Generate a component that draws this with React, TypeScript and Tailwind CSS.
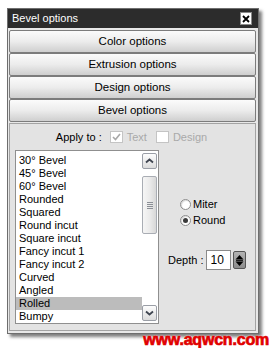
import { useState } from 'react'

const ITEMS = [
  '30° Bevel',
  '45° Bevel',
  '60° Bevel',
  'Rounded',
  'Squared',
  'Round incut',
  'Square incut',
  'Fancy incut 1',
  'Fancy incut 2',
  'Curved',
  'Angled',
  'Rolled',
  'Bumpy',
]

const TABS = ['Color options', 'Extrusion options', 'Design options', 'Bevel options']

function Chevron({ down }: { down?: boolean }) {
  return (
    <svg width="9" height="6" viewBox="0 0 9 6">
      <path
        d={down ? 'M1 1.5 L4.5 4.5 L8 1.5' : 'M1 4.5 L4.5 1.5 L8 4.5'}
        fill="none"
        stroke="#3f4550"
        strokeWidth="1.8"
      />
    </svg>
  )
}

function Radio({ checked, label, onClick }: { checked: boolean; label: string; onClick: () => void }) {
  return (
    <button onClick={onClick} className="flex items-center gap-[2px] h-[16px]">
      <span className="w-[11px] h-[11px] rounded-full border border-[#8c8c8c] bg-white flex items-center justify-center shadow-[inset_1px_1px_1px_rgba(0,0,0,0.15)]">
        {checked && <span className="w-[5px] h-[5px] rounded-full bg-[#3a3a3a]" />}
      </span>
      <span className="text-black">{label}</span>
    </button>
  )
}

export default function App() {
  const [selected, setSelected] = useState('Rolled')
  const [shape, setShape] = useState<'miter' | 'round'>('round')
  const [depth, setDepth] = useState(10)

  return (
    <div className="relative w-[269px] h-[348px] bg-white pl-[7px] pt-[8px] font-['Liberation_Sans',Arial,sans-serif] text-[11px] leading-[13px] text-black">
      {/* Panel */}
      <div className="w-[252px] h-[326px] border border-[#6e6e6e] bg-[#e8e8e8] flex flex-col shadow-[3px_3px_3px_rgba(0,0,0,0.5)]">
        {/* Title bar */}
        <div className="h-[19px] bg-[#2c2c2c] flex items-center justify-between pl-[4px] pr-[6px] shrink-0">
          <span className="text-white">Bevel options</span>
          <span className="w-[12px] h-[13px] bg-white border border-[#8a8a8a] flex items-center justify-center">
            <svg width="8" height="8" viewBox="0 0 8 8">
              <path d="M1 1 L7 7 M7 1 L1 7" stroke="#000" strokeWidth="1.8" />
            </svg>
          </span>
        </div>

        {/* Tab buttons */}
        <div className="flex flex-col px-[1px] pt-[2px] shrink-0">
          {TABS.map((t) => (
            <button
              key={t}
              className="h-[23px] w-[247px] rounded-[2px] border border-[#7c7c7c] bg-gradient-to-b from-[#fbfbfb] via-[#ececec] to-[#cfcfcf] text-center text-[11.5px] text-black"
            >
              {t}
            </button>
          ))}
        </div>

        {/* Body */}
        <div className="mx-[1px] mt-[1px] mb-[2px] w-[247px] flex-1 border border-[#a3a3a3] bg-[#e3e3e3] flex flex-col">
          {/* Apply to */}
          <div className="flex items-center justify-center h-[14px] mt-[6px] pr-[2px]">
            <span className="mr-[8px]">Apply to :</span>
            <span className="w-[13px] h-[12px] border border-[#c4c4c4] bg-white flex items-center justify-center">
              <svg width="9" height="8" viewBox="0 0 9 8">
                <path d="M1 4 L3.5 6.5 L8 1" fill="none" stroke="#a8a8a8" strokeWidth="1.6" />
              </svg>
            </span>
            <span className="ml-[4px] mr-[9px] text-[#a9a9a9]">Text</span>
            <span className="w-[13px] h-[12px] border border-[#c4c4c4] bg-white" />
            <span className="ml-[4px] text-[#a9a9a9]">Design</span>
          </div>

          <div className="flex mt-[6px]">
            {/* List box */}
            <div className="ml-[5px] w-[144px] h-[174px] border border-[#8f8f8f] bg-white flex">
              <div className="flex-1 pt-[3px]">
                {ITEMS.map((it) => (
                  <div
                    key={it}
                    onClick={() => setSelected(it)}
                    className={
                      'h-[13px] pl-[3px] leading-[13px] cursor-default ' +
                      (selected === it ? 'bg-[#bcbcbc]' : '')
                    }
                  >
                    {it}
                  </div>
                ))}
              </div>
              {/* Scrollbar */}
              <div className="w-[15px] mr-[1px] mt-[2px] mb-[2px] flex flex-col">
                <div className="h-[16px] rounded-[2px] border border-[#9a9ea6] bg-gradient-to-b from-[#fdfdfd] to-[#dcdcdc] flex items-center justify-center">
                  <Chevron />
                </div>
                <div className="mt-[7px] h-[58px] rounded-[2px] border border-[#a9adb4] bg-gradient-to-r from-[#f6f6f6] via-[#ebebeb] to-[#d8d8d8] flex flex-col items-center justify-center gap-[1px]">
                  <span className="w-[6px] h-[1px] bg-[#8b8f96]" />
                  <span className="w-[6px] h-[1px] bg-[#8b8f96]" />
                  <span className="w-[6px] h-[1px] bg-[#8b8f96]" />
                  <span className="w-[6px] h-[1px] bg-[#8b8f96]" />
                </div>
                <div className="flex-1" />
                <div className="h-[16px] rounded-[2px] border border-[#9a9ea6] bg-gradient-to-b from-[#fdfdfd] to-[#dcdcdc] flex items-center justify-center">
                  <Chevron down />
                </div>
              </div>
            </div>

            {/* Right column */}
            <div className="flex-1 flex flex-col">
              <div className="ml-[21px] mt-[46px] flex flex-col">
                <Radio checked={shape === 'miter'} label="Miter" onClick={() => setShape('miter')} />
                <Radio checked={shape === 'round'} label="Round" onClick={() => setShape('round')} />
              </div>
              <div className="ml-[9px] mt-[22px] flex items-center">
                <span className="mr-[3px]">Depth :</span>
                <span className="w-[25px] h-[20px] border border-[#8a8a8a] bg-white pl-[3px] flex items-center text-[12px]">
                  {depth}
                </span>
                <button
                  onClick={() => setDepth(depth + 1)}
                  className="ml-[2px] w-[13px] h-[18px] rounded-[2px] border border-[#555] bg-gradient-to-b from-[#b4b4b4] to-[#8c8c8c] flex items-center justify-center"
                >
                  <svg width="9" height="13" viewBox="0 0 9 13">
                    <path d="M4.5 1 L8.5 5.5 L0.5 5.5 Z" fill="#000" />
                    <path d="M0.5 7.5 L8.5 7.5 L4.5 12 Z" fill="#000" />
                    <path d="M1 6.5 H8" stroke="#000" strokeWidth="0.8" />
                  </svg>
                </button>
              </div>
            </div>
          </div>
        </div>
      </div>

      {/* Watermark */}
      <span className="absolute right-0 bottom-[1px] font-['Liberation_Sans',Arial,sans-serif] font-bold text-[16px] leading-[15px] tracking-[-0.2px] text-[#e00000] [-webkit-text-stroke:0.7px_#e00000] [text-shadow:0_0_2px_#fff,0_0_1px_#fff]">
        www.aqwcn.com
      </span>
    </div>
  )
}
